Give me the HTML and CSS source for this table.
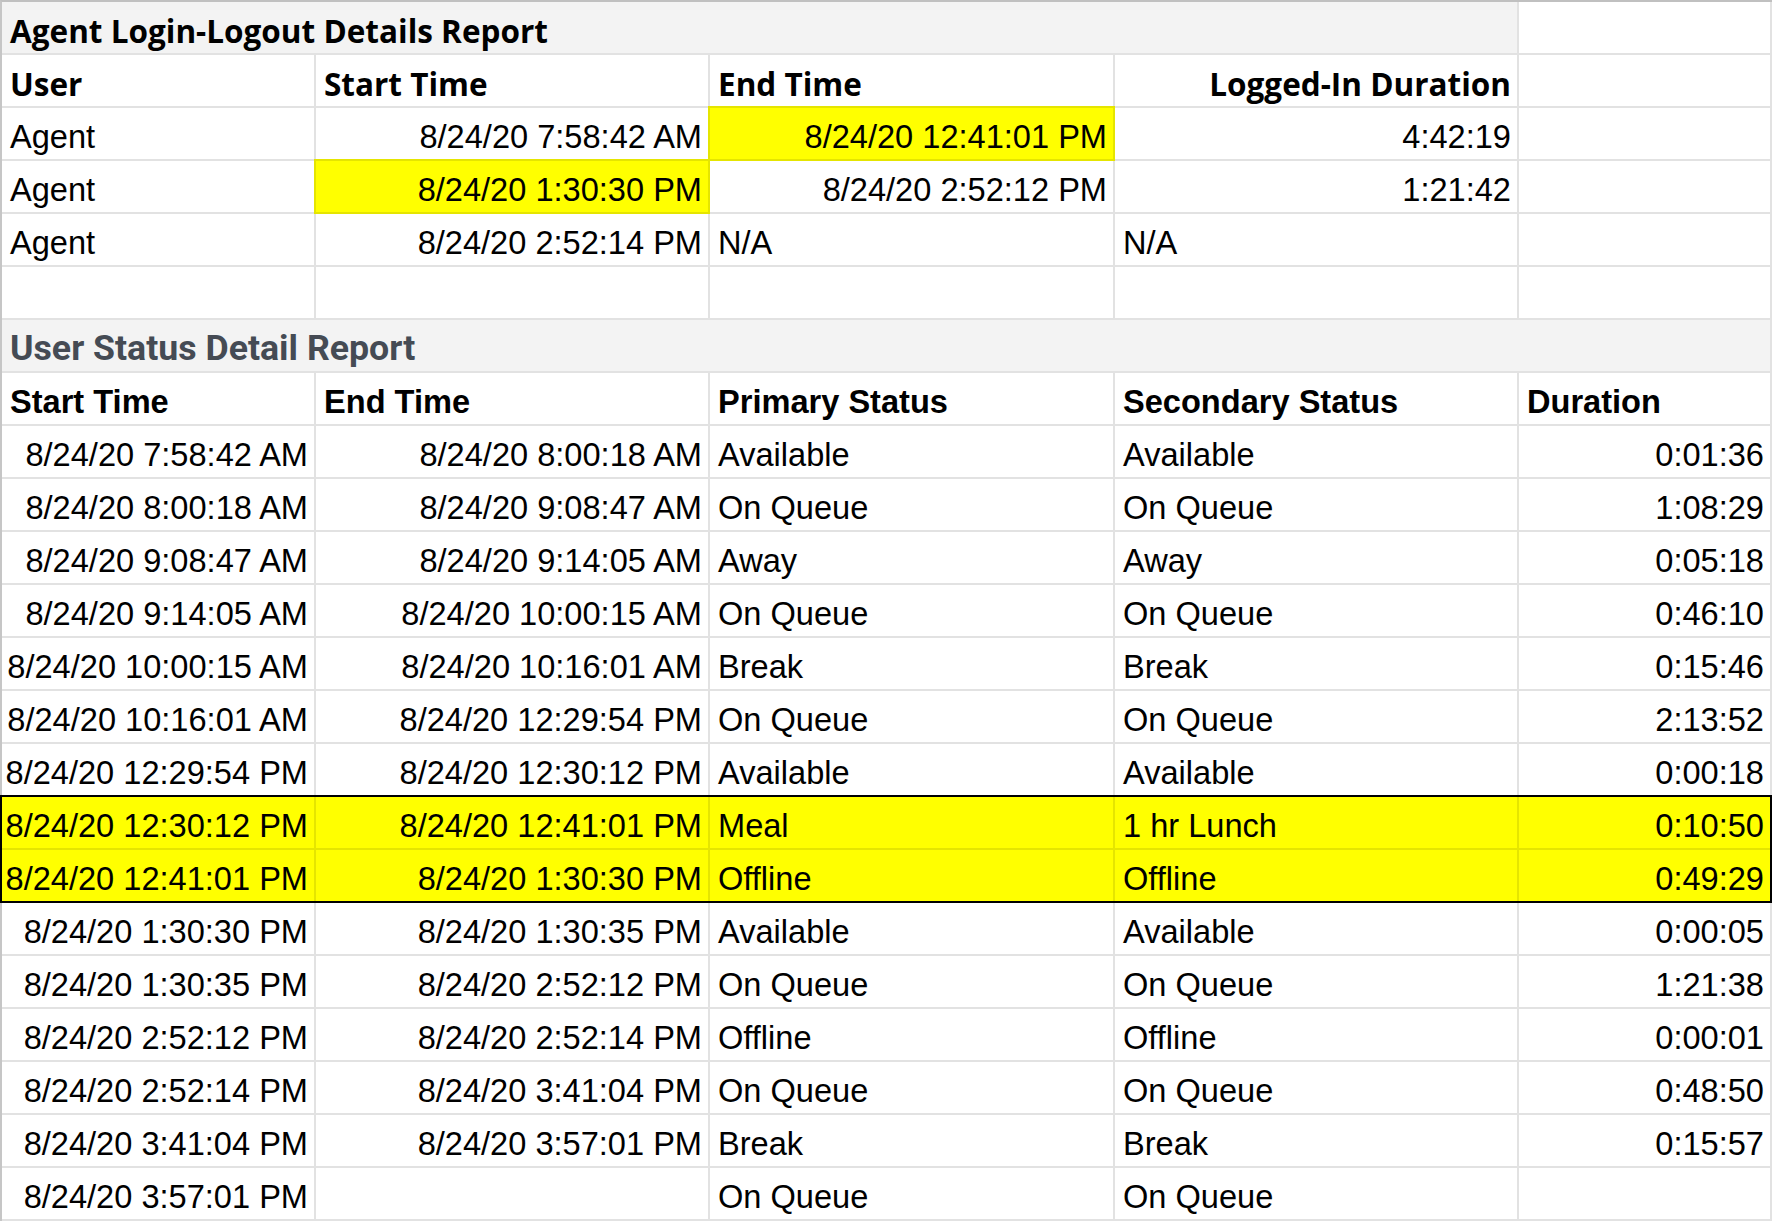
FILE: index.html
```html
<!DOCTYPE html>
<html lang="en">
<head>
<meta charset="utf-8">
<title>Agent Login-Logout Details Report</title>
<link rel="stylesheet" href="styles.css">
</head>
<body>
<div class="sheet">
  <div class="row">
    <div class="cell title-a span4">Agent Login-Logout Details Report</div>
    <div class="cell"></div>
  </div>
  <div class="row">
    <div class="cell head-a">User</div>
    <div class="cell head-a">Start Time</div>
    <div class="cell head-a">End Time</div>
    <div class="cell head-a r">Logged-In Duration</div>
    <div class="cell"></div>
  </div>
  <div class="row">
    <div class="cell">Agent</div>
    <div class="cell r">8/24/20 7:58:42 AM</div>
    <div class="cell r hl">8/24/20 12:41:01 PM</div>
    <div class="cell r">4:42:19</div>
    <div class="cell"></div>
  </div>
  <div class="row">
    <div class="cell">Agent</div>
    <div class="cell r hl">8/24/20 1:30:30 PM</div>
    <div class="cell r">8/24/20 2:52:12 PM</div>
    <div class="cell r">1:21:42</div>
    <div class="cell"></div>
  </div>
  <div class="row">
    <div class="cell">Agent</div>
    <div class="cell r">8/24/20 2:52:14 PM</div>
    <div class="cell">N/A</div>
    <div class="cell">N/A</div>
    <div class="cell"></div>
  </div>
  <div class="row">
    <div class="cell"></div><div class="cell"></div><div class="cell"></div><div class="cell"></div><div class="cell"></div>
  </div>
  <div class="row">
    <div class="cell title-b span5">User Status Detail Report</div>
  </div>
  <div class="row">
    <div class="cell head-b">Start Time</div>
    <div class="cell head-b">End Time</div>
    <div class="cell head-b">Primary Status</div>
    <div class="cell head-b">Secondary Status</div>
    <div class="cell head-b">Duration</div>
  </div>
  <div class="row">
    <div class="cell r">8/24/20 7:58:42 AM</div><div class="cell r">8/24/20 8:00:18 AM</div><div class="cell">Available</div><div class="cell">Available</div><div class="cell r">0:01:36</div>
  </div>
  <div class="row">
    <div class="cell r">8/24/20 8:00:18 AM</div><div class="cell r">8/24/20 9:08:47 AM</div><div class="cell">On Queue</div><div class="cell">On Queue</div><div class="cell r">1:08:29</div>
  </div>
  <div class="row">
    <div class="cell r">8/24/20 9:08:47 AM</div><div class="cell r">8/24/20 9:14:05 AM</div><div class="cell">Away</div><div class="cell">Away</div><div class="cell r">0:05:18</div>
  </div>
  <div class="row">
    <div class="cell r">8/24/20 9:14:05 AM</div><div class="cell r">8/24/20 10:00:15 AM</div><div class="cell">On Queue</div><div class="cell">On Queue</div><div class="cell r">0:46:10</div>
  </div>
  <div class="row">
    <div class="cell r">8/24/20 10:00:15 AM</div><div class="cell r">8/24/20 10:16:01 AM</div><div class="cell">Break</div><div class="cell">Break</div><div class="cell r">0:15:46</div>
  </div>
  <div class="row">
    <div class="cell r">8/24/20 10:16:01 AM</div><div class="cell r">8/24/20 12:29:54 PM</div><div class="cell">On Queue</div><div class="cell">On Queue</div><div class="cell r">2:13:52</div>
  </div>
  <div class="row">
    <div class="cell r">8/24/20 12:29:54 PM</div><div class="cell r">8/24/20 12:30:12 PM</div><div class="cell">Available</div><div class="cell">Available</div><div class="cell r">0:00:18</div>
  </div>
  <div class="group">
    <div class="row">
      <div class="cell r hl">8/24/20 12:30:12 PM</div><div class="cell r hl">8/24/20 12:41:01 PM</div><div class="cell hl">Meal</div><div class="cell hl">1 hr Lunch</div><div class="cell r hl">0:10:50</div>
    </div>
    <div class="row">
      <div class="cell r hl">8/24/20 12:41:01 PM</div><div class="cell r hl">8/24/20 1:30:30 PM</div><div class="cell hl">Offline</div><div class="cell hl">Offline</div><div class="cell r hl">0:49:29</div>
    </div>
  </div>
  <div class="row">
    <div class="cell r">8/24/20 1:30:30 PM</div><div class="cell r">8/24/20 1:30:35 PM</div><div class="cell">Available</div><div class="cell">Available</div><div class="cell r">0:00:05</div>
  </div>
  <div class="row">
    <div class="cell r">8/24/20 1:30:35 PM</div><div class="cell r">8/24/20 2:52:12 PM</div><div class="cell">On Queue</div><div class="cell">On Queue</div><div class="cell r">1:21:38</div>
  </div>
  <div class="row">
    <div class="cell r">8/24/20 2:52:12 PM</div><div class="cell r">8/24/20 2:52:14 PM</div><div class="cell">Offline</div><div class="cell">Offline</div><div class="cell r">0:00:01</div>
  </div>
  <div class="row">
    <div class="cell r">8/24/20 2:52:14 PM</div><div class="cell r">8/24/20 3:41:04 PM</div><div class="cell">On Queue</div><div class="cell">On Queue</div><div class="cell r">0:48:50</div>
  </div>
  <div class="row">
    <div class="cell r">8/24/20 3:41:04 PM</div><div class="cell r">8/24/20 3:57:01 PM</div><div class="cell">Break</div><div class="cell">Break</div><div class="cell r">0:15:57</div>
  </div>
  <div class="row">
    <div class="cell r">8/24/20 3:57:01 PM</div><div class="cell r"></div><div class="cell">On Queue</div><div class="cell">On Queue</div><div class="cell r"></div>
  </div>
</div>
</body>
</html>
```
FILE: styles.css
```css
html, body {
  margin: 0;
  padding: 0;
  background: #ffffff;
}

body {
  overflow: hidden;
  font-family: "Liberation Sans", Arial, sans-serif;
  font-size: 32.6px;
  color: #000000;
}

.sheet {
  width: 1770px;
  border-top: 2px solid #c0c0c0;
  border-left: 2px solid #c6c6c6;
}

.row {
  display: grid;
  grid-template-columns: 314px 394px 405px 404px 253px;
}

.cell {
  box-sizing: border-box;
  height: 53px;
  border-right: 2px solid #e2e2e2;
  border-bottom: 2px solid #e2e2e2;
  padding: 0 6px 3px 8px;
  display: flex;
  align-items: flex-end;
  white-space: nowrap;
  overflow: visible;
  background: #ffffff;
}

.r {
  justify-content: flex-end;
}

.span4 {
  grid-column: span 4;
}

.span5 {
  grid-column: span 5;
}

.title-a {
  background: #f3f3f3;
  font-family: "Open Sans", "Noto Sans", sans-serif;
  font-weight: 700;
  font-size: 31.5px;
  line-height: 1.2;
  padding-bottom: 3px;
}

.head-a {
  font-family: "Open Sans", "Noto Sans", sans-serif;
  font-weight: 700;
  font-size: 31.5px;
  line-height: 1.2;
  padding-bottom: 3px;
}

.title-b {
  background: #f3f3f3;
  font-family: Roboto, sans-serif;
  font-weight: 700;
  font-size: 35.7px;
  color: #454b54;
  padding-bottom: 2px;
}

.head-b {
  font-weight: 700;
}

.hl {
  background: #ffff00;
  position: relative;
}

.hl::after {
  content: "";
  position: absolute;
  top: -2px;
  left: -2px;
  right: -2px;
  bottom: -2px;
  border: 2px solid #e5e500;
  pointer-events: none;
  z-index: 1;
}

.group {
  position: relative;
}

.group::after {
  content: "";
  position: absolute;
  top: -2px;
  left: -2px;
  right: 0;
  bottom: 0;
  border: 2px solid #000000;
  pointer-events: none;
  z-index: 2;
}
```
